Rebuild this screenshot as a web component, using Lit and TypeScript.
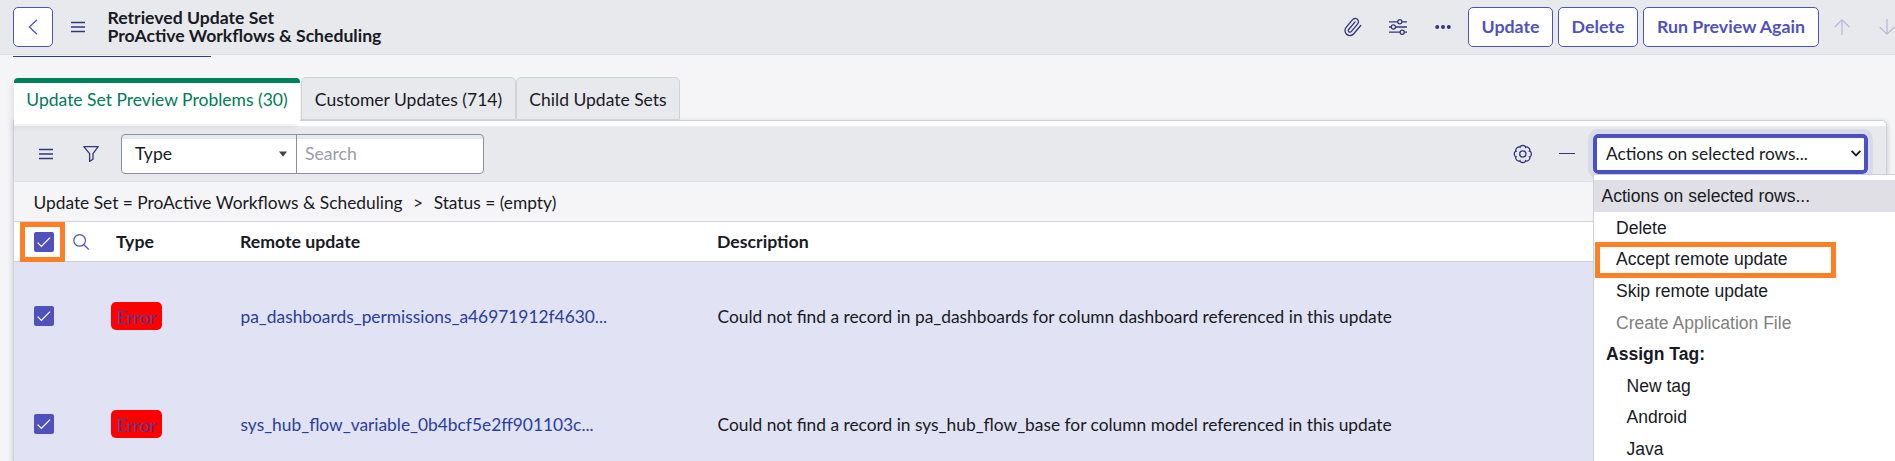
import { LitElement, html, css, svg } from "lit";
import { customElement } from "lit/decorators.js";
import { classMap } from "lit/directives/class-map.js";

const rows = [
  {
    type: "Error",
    update: "pa_dashboards_permissions_a46971912f4630...",
    description: "Could not find a record in pa_dashboards for column dashboard referenced in this update",
  },
  {
    type: "Error",
    update: "sys_hub_flow_variable_0b4bcf5e2ff901103c...",
    description: "Could not find a record in sys_hub_flow_base for column model referenced in this update",
  },
];

const actions = [
  { label: "Actions on selected rows...", kind: "current" },
  { label: "Delete", kind: "item" },
  { label: "Accept remote update", kind: "item" },
  { label: "Skip remote update", kind: "item" },
  { label: "Create Application File", kind: "disabled" },
  { label: "Assign Tag:", kind: "group" },
  { label: "New tag", kind: "nested" },
  { label: "Android", kind: "nested" },
  { label: "Java", kind: "nested" },
];

const icon = (w: number, h: number, body: unknown, cls = "icon") =>
  html`<svg class=${cls} width=${w} height=${h} viewBox="0 0 ${w} ${h}" fill="none">${body}</svg>`;

const menuIcon = () => icon(14, 10, svg`<path d="M0 .5H14M0 5H14M0 9.5H14" stroke="currentColor" stroke-width="1.4"/>`);

const gearPath = (() => {
  const pts: string[] = [];
  for (let i = 0; i <= 128; i++) {
    const a = (i / 128) * Math.PI * 2;
    const r = 7.2 + 1.3 * Math.sqrt(Math.abs(Math.cos(4 * a)));
    pts.push(`${(9 + r * Math.cos(a)).toFixed(2)} ${(9 + r * Math.sin(a)).toFixed(2)}`);
  }
  return `M${pts.join("L")}Z`;
})();

const check = () => html`<span class="check">${icon(20, 20, svg`<path d="M3.6 10.6L7.4 14.4L16 5.6" stroke="#fff" stroke-width="1.3"/>`)}</span>`;

@customElement("app-root")
export class AppRoot extends LitElement {
  static styles = css`
    :host { display: block; height: 461px; overflow: hidden; position: relative; background: #f5f5f8; color: #181a24; font: 17.35px/20px Lato, sans-serif; white-space: nowrap; }
    * { box-sizing: border-box; }
    .icon { display: block; flex: none; overflow: visible; }
    .header { height: 55px; background: #e8e9ed; border-bottom: 1px solid #dddee3; display: flex; padding: 7px 0 0 13px; color: #34357f; }
    .back { width: 40px; height: 40px; background: #fff; border: 1px solid #4f52bd; border-radius: 5px; color: #4f52bd; display: grid; place-items: center; margin-right: 18px; }
    .header .icon { align-self: center; margin-bottom: 8px; }
    .header .back .icon { margin: 0; }
    .title { margin: 2px auto 0 22.5px; font-weight: 700; font-size: 17.6px; line-height: 18px; color: #181a24; }
    .tools { display: flex; align-items: center; height: 40px; width: 551px; flex: none; }
    .header .tools .icon { margin-bottom: 0; }
    .header .tools .sliders { margin-left: 27px; }
    .header .tools .dots { margin: 0 16px 0 28px; }
    .btn { height: 40px; background: #fff; border: 1px solid #4f52bd; border-radius: 5px; color: #4f52bd; font-weight: 700; font-size: 17.8px; display: grid; place-items: center; margin-right: 5px; padding-bottom: 2px; flex: none; }
    .update { width: 85px; margin-left: 1px; } .delete { width: 80px; } .run { width: 176px; }
    .header .tools .up { margin: 0 29px 0 10px; color: #b9badb; }
    .header .tools .down { color: #b9badb; }
    .rule { width: 198px; height: 1px; background: #293e9b; margin: 1px 0 20px 13px; }
    .tabs { display: flex; margin-left: 14px; height: 43px; position: relative; }
    .tab { height: 43px; background: #e8e9ed; border: 1px solid #d0d2da; border-radius: 5px 5px 0 0; text-align: center; line-height: 43px; font-size: 17.5px; }
    .tab.active { height: 46px; width: 286px; background: #fff; border: 0; border-top: 5px solid #00805c; border-radius: 4px 4px 0 0; margin-top: 1px; color: #007a57; line-height: 34px; box-shadow: -3px 3px 6px #00000012; }
    .customer { width: 215px; margin-left: 1px; }
    .child { width: 164px; }
    .panel { width: 1874px; margin-left: 13px; height: 341px; background: #fff; border: 1px solid #cdd0d9; border-top-right-radius: 5px; box-shadow: 0 2px 6px #0000002e; }
    .toolbar { margin-top: 5px; height: 56px; background: #e8e9ed; border-bottom: 1px solid #dedfe5; display: flex; align-items: center; padding: 0 18px 0 25px; color: #34357f; }
    .funnel { margin: 0 22px 0 30px; display: block; }
    .search { width: 363px; height: 40px; border: 1px solid #8b90a3; border-radius: 4px; background: linear-gradient(#e8e9ed 4px, #fff 4px); display: flex; color: #181a24; font-size: 17.6px; line-height: 38px; }
    .field { width: 175px; padding: 0 9px 0 13px; border-right: 1px solid #8b90a3; display: flex; justify-content: space-between; align-items: center; }
    .placeholder { padding-left: 8px; color: #9a9ca6; }
    .gear { margin-left: auto; }
    .dash { width: 16px; height: 1px; background: #34357f; margin: 0 18px 0 28px; }
    .select { width: 275px; height: 40px; border: 4px solid #4b50c4; outline: 5px solid #d7dbe8; border-radius: 5px; background: #fff; color: #181a24; display: flex; align-items: center; justify-content: space-between; padding: 0 3px 0 9px; font-size: 17.3px; }
    .crumb { height: 40px; background: #f5f5f8; border-bottom: 1px solid #d3d5dc; padding-left: 19.5px; line-height: 41px; display: flex; }
    .sep { width: 31px; text-align: center; }
    .row { display: grid; grid-template-columns: 39px 38px 125px 477px 1fr; padding-left: 20px; align-items: center; height: 108px; background: #e1e2f3; }
    .row.head { height: 40px; background: #fff; border-bottom: 1px solid #cfd2da; font-weight: 700; font-size: 17.7px; grid-template-columns: 39px 43px 124px 477px 1fr; color: #181a24; }
    .head .label { padding-top: 1px; }
    .check { display: block; width: 20px; height: 20px; background: #4f52bd; border-radius: 2px; }
    .mag { color: #4f52bd; }
    .badge { justify-self: start; width: 51px; height: 28px; line-height: 30px; text-align: center; background: #f00; color: #4d3f93; border-radius: 5px; font-size: 18px; }
    .body .link { padding: 2px 0 0 4.5px; color: #293e9b; }
    .body .desc { padding: 2px 0 0 4.5px; }
    .menu { position: absolute; left: 1593px; top: 174px; width: 310px; height: 300px; background: #fff; border: 1px solid #cccdd8; padding-top: 5px; font: 17.55px/32.5px "Liberation Sans", Arial, sans-serif; color: #181a24; }
    .option { height: 31.65px; padding-left: 22px; }
    .current { background: #e0dfe6; padding-left: 7.5px; }
    .disabled { color: #808080; }
    .group { padding-left: 12px; font-weight: 700; }
    .nested { padding-left: 32.5px; }
    .mark { position: absolute; border: 5px solid #ff7f27; }
    .mark-all { left: 20px; top: 222px; width: 45px; height: 40px; }
    .mark-accept { left: 1595px; top: 242px; width: 241px; height: 36px; }
  `;

  render() {
    return html`
      <div class="header">
        <div class="back">${icon(10, 16, svg`<path d="M9 .8L1.4 8L9 15.2" stroke="currentColor" stroke-width="1.3"/>`)}</div>
        ${menuIcon()}
        <div class="title">Retrieved Update Set<br />ProActive Workflows &amp; Scheduling</div>
        <div class="tools">
          ${icon(18, 18, svg`<g transform="rotate(-5 9 9) translate(-1 -1) scale(.83)"><path d="m21.44 11.05-9.19 9.19a6 6 0 0 1-8.49-8.49l8.57-8.57A4 4 0 1 1 18 8.84l-8.59 8.57a2 2 0 0 1-2.83-2.83l8.49-8.48" stroke="currentColor" stroke-width="1.6" stroke-linecap="round"/></g>`)}
          ${icon(18, 16, svg`<g stroke="currentColor" stroke-width="1.3"><path d="M0 2.8H8.6M13 2.8H18M0 8H2.2M6.6 8H18M0 13.2H11M15.4 13.2H18"/><circle cx="10.8" cy="2.8" r="2.1"/><circle cx="4.4" cy="8" r="2.1"/><circle cx="13.2" cy="13.2" r="2.1"/></g>`, "icon sliders")}
          ${icon(16, 4, svg`<g fill="currentColor"><circle cx="2.2" cy="2" r="2"/><circle cx="8" cy="2" r="2"/><circle cx="13.8" cy="2" r="2"/></g>`, "icon dots")}
          <div class="btn update">Update</div>
          <div class="btn delete">Delete</div>
          <div class="btn run">Run Preview Again</div>
          ${icon(16, 16, svg`<path d="M8 16V.8M.7 8L8 .8L15.3 8" stroke="currentColor" stroke-width="1.3"/>`, "icon up")}
          ${icon(16, 16, svg`<path d="M8 0V15.2M.7 8L8 15.2L15.3 8" stroke="currentColor" stroke-width="1.3"/>`, "icon down")}
        </div>
      </div>
      <div class="rule"></div>
      <div class="tabs">
        <div class="tab active"><span>Update Set Preview Problems (30)</span></div>
        <div class="tab customer"><span>Customer Updates (714)</span></div>
        <div class="tab child"><span>Child Update Sets</span></div>
      </div>
      <div class="panel">
        <div class="toolbar">
          ${menuIcon()}
          ${icon(16, 16, svg`<path d="M.8 .7H15.2L10 7.6V13.2L6.6 15.4V7.6Z" stroke="currentColor" stroke-width="1.3" stroke-linejoin="round"/>`, "icon funnel")}
          <div class="search">
            <div class="field"><span>Type</span>${icon(8, 6, svg`<path d="M0 .5H8L4 5.8Z" fill="#414451"/>`)}</div>
            <span class="placeholder">Search</span>
          </div>
          ${icon(18, 18, svg`<g transform="translate(.8 0)"><path d=${gearPath} stroke="currentColor" stroke-width="1.3"/><circle cx="9" cy="9" r="3.1" stroke="currentColor" stroke-width="1.3"/></g>`, "icon gear")}
          <span class="dash"></span>
          <div class="select"><span>Actions on selected rows...</span>${icon(10, 7, svg`<path d="M.6 .8L5 5.4L9.4 .8" stroke="#181a24" stroke-width="1.9"/>`)}</div>
        </div>
        <div class="crumb"><span>Update Set = ProActive Workflows &amp; Scheduling</span><span class="sep">&gt;</span><span>Status = (empty)</span></div>
        <div class="row head">
          ${check()}
          ${icon(16, 16, svg`<circle cx="6.6" cy="6.4" r="5.8" stroke="currentColor" stroke-width="1.2"/><path d="M10.7 10.5L15.7 15.5" stroke="currentColor" stroke-width="1.2"/>`, "icon mag")}
          <span class="label">Type</span><span class="label">Remote update</span><span class="label">Description</span>
        </div>
        <div class="body">
          ${rows.map((r) => html`<div class="row">${check()}<span></span><span class="badge">${r.type}</span><span class="link">${r.update}</span><span class="desc">${r.description}</span></div>`)}
        </div>
      </div>
      <div class="menu">
        ${actions.map((a) => html`<div class=${classMap({ option: true, [a.kind]: true })}>${a.label}</div>`)}
      </div>
      <div class="mark mark-all"></div>
      <div class="mark mark-accept"></div>
    `;
  }
}
